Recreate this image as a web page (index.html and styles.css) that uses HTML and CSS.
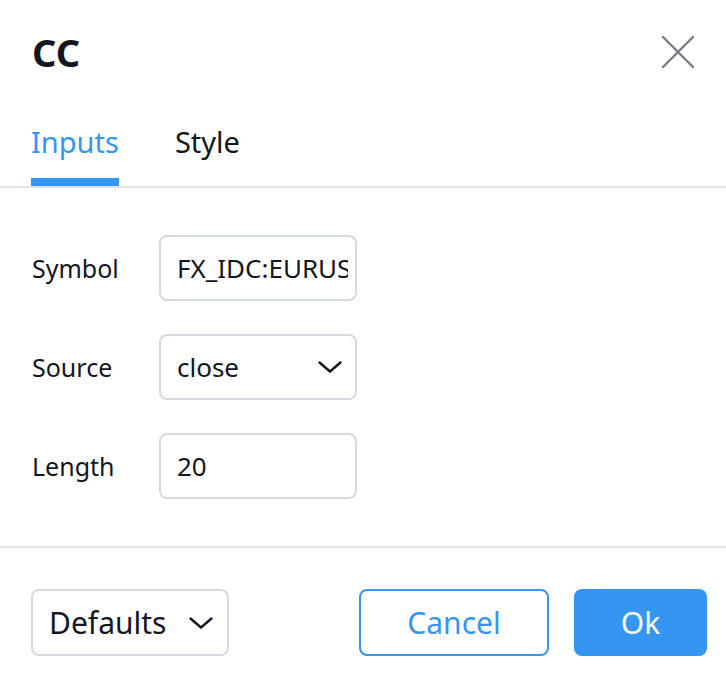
FILE: index.html
```html
<!DOCTYPE html>
<html lang="en">
<head>
<meta charset="utf-8">
<title>CC</title>
<link rel="stylesheet" href="styles.css">
</head>
<body>
<div class="dialog">
  <div class="header">
    <div class="title">CC</div>
    <button class="close" aria-label="Close">
      <svg width="32" height="32" viewBox="0 0 32 32"><path d="M1 1L31 31M31 1L1 31" stroke="#787b86" stroke-width="2.4" fill="none" stroke-linecap="round"/></svg>
    </button>
  </div>
  <div class="tabs">
    <div class="tab active">Inputs</div>
    <div class="tab">Style</div>
  </div>
  <div class="content">
    <div class="row">
      <div class="label">Symbol</div>
      <div class="field"><span class="field-text">FX_IDC:EURUSD</span></div>
    </div>
    <div class="row">
      <div class="label">Source</div>
      <div class="field select"><span class="field-text">close</span>
        <svg class="chev" width="24" height="12" viewBox="0 0 24 12"><path d="M1.5 1.5L12 10.5L22.5 1.5" stroke="#131722" stroke-width="2.4" fill="none" stroke-linecap="round" stroke-linejoin="round"/></svg>
      </div>
    </div>
    <div class="row">
      <div class="label">Length</div>
      <div class="field"><span class="field-text">20</span></div>
    </div>
  </div>
  <div class="footer">
    <div class="defaults">Defaults
      <svg class="chev" width="24" height="12" viewBox="0 0 24 12"><path d="M1.5 1.5L12 10.5L22.5 1.5" stroke="#131722" stroke-width="2.4" fill="none" stroke-linecap="round" stroke-linejoin="round"/></svg>
    </div>
    <div class="actions">
      <button class="btn cancel">Cancel</button>
      <button class="btn ok">Ok</button>
    </div>
  </div>
</div>
</body>
</html>
```
FILE: styles.css
```css
* { box-sizing: border-box; }
html, body { margin: 0; padding: 0; background: #fff; }
body {
  font-family: "Noto Sans", "Open Sans", sans-serif;
  color: #131722;
  width: 726px;
  height: 688px;
  overflow: hidden;
}
.dialog { width: 726px; }
.header {
  display: flex;
  justify-content: space-between;
  align-items: center;
  padding: 26px 32px 0 32px;
}
.title {
  font-size: 38px;
  font-weight: 700;
  line-height: 52px;
}
.close {
  border: 0;
  background: none;
  padding: 0;
  width: 32px;
  height: 32px;
  display: block;
}
.close svg { display: block; }
.tabs {
  display: flex;
  gap: 56px;
  padding: 0 31px;
  margin-top: 44px;
  border-bottom: 2px solid #e0e3eb;
}
.tab {
  font-size: 29px;
  line-height: 40px;
  padding-bottom: 16px;
  border-bottom: 8px solid transparent;
}
.tab.active {
  color: #3596f2;
  border-bottom-color: #3596f2;
}
.content {
  padding: 47px 0 47px 32px;
  display: flex;
  flex-direction: column;
  gap: 33px;
  border-bottom: 2px solid #e0e3eb;
}
.row {
  display: flex;
  align-items: center;
}
.label {
  width: 127px;
  font-size: 25px;
}
.field {
  width: 198px;
  height: 66px;
  border: 2px solid #d6d9e0;
  border-radius: 8px;
  display: flex;
  align-items: center;
  padding: 0 7px 0 16px;
  font-size: 26px;
  overflow: hidden;
}
.field-text {
  flex: 1;
  overflow: hidden;
  white-space: nowrap;
}
.field.select { padding-right: 13px; }
.chev { display: block; flex: none; }
.footer {
  display: flex;
  justify-content: space-between;
  align-items: center;
  padding: 41px 19px 0 31px;
}
.defaults {
  width: 198px;
  height: 67px;
  border: 2px solid #d6d9e0;
  border-radius: 8px;
  display: flex;
  align-items: center;
  justify-content: space-between;
  padding: 0 14px 0 16px;
  font-size: 30px;
}
.actions { display: flex; gap: 25px; }
.btn {
  height: 67px;
  border-radius: 8px;
  font-family: inherit;
  font-size: 30px;
  padding: 0;
}
.cancel {
  width: 190px;
  border: 2px solid #3596f2;
  background: #fff;
  color: #3596f2;
}
.ok {
  width: 133px;
  border: 0;
  background: #3596f2;
  color: #fff;
}
```
